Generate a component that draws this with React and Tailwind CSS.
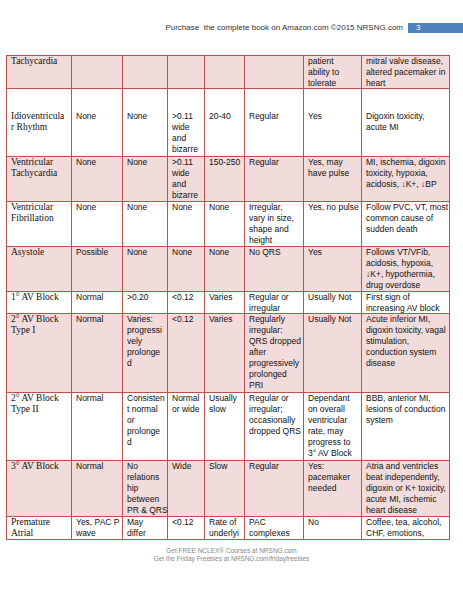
import React from 'react';

const pink = 'bg-[#f2dbdb]';
const white = 'bg-white';

const rows = [
    { bg: pink, cells: [['Tachycardia'], [], [], [], [], [], ['patient', 'ability to', 'tolerate'], ['mitral valve disease,', 'altered pacemaker in', 'heart']] },
    { bg: white, pad: true, cells: [['Idioventricula', 'r Rhythm'], ['None'], ['None'], ['>0.11', 'wide', 'and', 'bizarre'], ['20-40'], ['Regular'], ['Yes'], ['Digoxin toxicity,', 'acute MI']] },
    { bg: pink, cells: [['Ventricular', 'Tachycardia'], ['None'], ['None'], ['>0.11', 'wide', 'and', 'bizarre'], ['150-250'], ['Regular'], ['Yes, may', 'have pulse'], ['MI, ischemia, digoxin', 'toxicity, hypoxia,', 'acidosis, \u2193K+, \u2193BP']] },
    { bg: white, cells: [['Ventricular', 'Fibrillation'], ['None'], ['None'], ['None'], ['None'], ['Irregular,', 'vary in size,', 'shape and', 'height'], ['Yes, no pulse'], ['Follow PVC, VT, most', 'common cause of', 'sudden death']] },
    { bg: pink, cells: [['Asystole'], ['Possible'], ['None'], ['None'], ['None'], ['No QRS'], ['Yes'], ['Follows VT/VFib,', 'acidosis, hypoxia,', '\u2193K+, hypothermia,', 'drug overdose']] },
    { bg: white, cells: [['1\u00b0 AV Block'], ['Normal'], ['>0.20'], ['<0.12'], ['Varies'], ['Regular or', 'irregular'], ['Usually Not'], ['First sign of', 'increasing AV block']] },
    { bg: pink, cells: [['2\u00b0 AV Block', 'Type I'], ['Normal'], ['Varies:', 'progressi', 'vely', 'prolonge', 'd'], ['<0.12'], ['Varies'], ['Regularly', 'irregular:', 'QRS dropped', 'after', 'progressively', 'prolonged', 'PRI'], ['Usually Not'], ['Acute inferior MI,', 'digoxin toxicity, vagal', 'stimulation,', 'conduction system', 'disease']] },
    { bg: white, cells: [['2\u00b0 AV Block', 'Type II'], ['Normal'], ['Consisten', 't normal', 'or', 'prolonge', 'd'], ['Normal', 'or wide'], ['Usually', 'slow'], ['Regular or', 'irregular;', 'occasionally', 'dropped QRS'], ['Dependant', 'on overall', 'ventricular', 'rate, may', 'progress to', '3\u00b0 AV Block'], ['BBB, anterior MI,', 'lesions of conduction', 'system']] },
    { bg: pink, cells: [['3\u00b0 AV Block'], ['Normal'], ['No', 'relations', 'hip', 'between', 'PR & QRS'], ['Wide'], ['Slow'], ['Regular'], ['Yes:', 'pacemaker', 'needed'], ['Atria and ventricles', 'beat independently,', 'digoxin or K+ toxicity,', 'acute MI, ischemic', 'heart disease']] },
    { bg: white, cells: [['Premature', 'Atrial'], ['Yes, PAC P', 'wave'], ['May', 'differ'], ['<0.12'], ['Rate of', 'underlyi'], ['PAC', 'complexes'], ['No'], ['Coffee, tea, alcohol,', 'CHF, emotions,']] },
];

const Cell = ({ lines, bg, first, pad }) => (
    <div className={`${bg} pl-1 whitespace-nowrap overflow-visible text-[#111] leading-[11px] ${pad ? 'pt-[22px]' : 'pt-0'} ${first ? "font-['Liberation_Serif',serif] text-[9.5px]" : "font-['Liberation_Sans',sans-serif] text-[8.5px]"}`}>
        {lines.map((l, i) => <div key={i}>{l}</div>)}
    </div>
);

export default function App() {
    return (
        <div className="w-[463px] h-[599px] bg-white flex flex-col overflow-hidden">
            <div className="mt-[23px] h-[10px] flex flex-row items-center justify-end">
                <span className="font-['Liberation_Sans',sans-serif] text-[8px] text-[#333] whitespace-pre mr-[5px]">Purchase  the complete book on Amazon.com ©2015 NRSNG.com</span>
                <div className="w-[55px] h-[10px] bg-[#4f81bd] flex items-center pl-[8px]">
                    <span className="font-['Liberation_Sans',sans-serif] text-[8px] text-white">3</span>
                </div>
            </div>
            <div className="mt-[22px] ml-[6px] w-[444px] grid grid-cols-[64px_50px_44px_36px_39px_58px_57px_87px] grid-rows-[32px_67px_44px_44px_44px_21px_78px_67px_55px_22px] gap-px p-px bg-[#c0504d]">
                {rows.map((r, ri) =>
                    r.cells.map((c, ci) => <Cell key={`${ri}-${ci}`} lines={c} bg={r.bg} first={ci === 0} pad={r.pad} />)
                )}
            </div>
            <div className="mt-[7px] flex flex-col items-center font-['Liberation_Sans',sans-serif] text-[6.5px] leading-[8px] text-[#888]">
                <p>Get FREE NCLEX® Courses at NRSNG.com</p>
                <p>Get the Friday Freebies at NRSNG.com/fridayfreebies</p>
            </div>
        </div>
    );
}
